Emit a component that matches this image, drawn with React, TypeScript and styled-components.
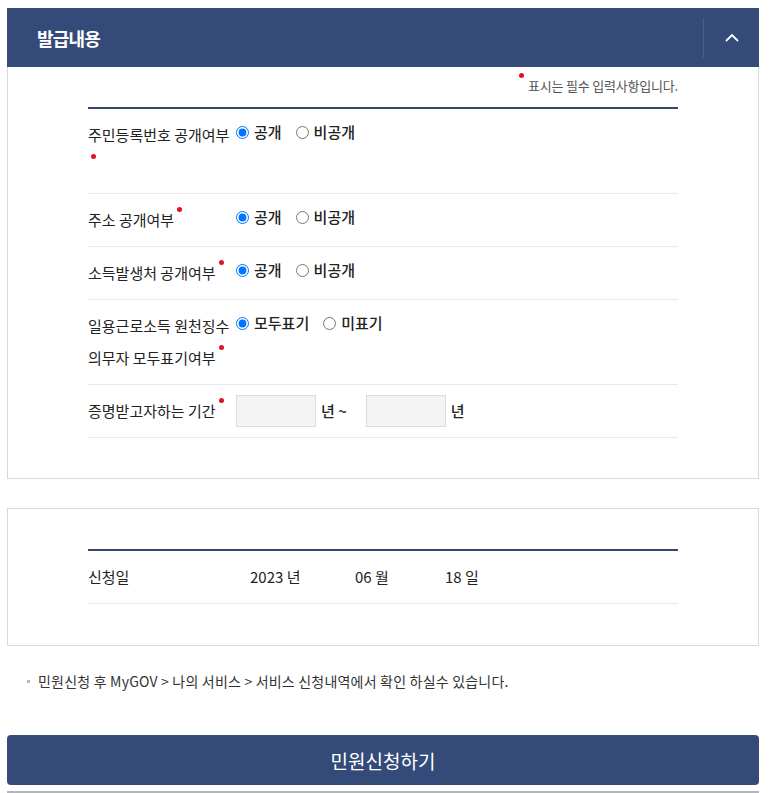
import styled, { createGlobalStyle } from "styled-components";

const GlobalStyle = createGlobalStyle`
  html, body {
    margin: 0;
    padding: 0;
    background: #fff;
  }
  body {
    font-family: "Noto Sans CJK KR", "Noto Sans", sans-serif;
    color: #222;
  }
`;

const Page = styled.div`
  width: 752px;
  padding: 8px 0 0 7px;
`;

const Header = styled.div`
  height: 59px;
  background: #344b79;
  display: flex;
  align-items: center;
  justify-content: space-between;
`;

const Title = styled.h2`
  margin: 0 0 0 30px;
  font-size: 18px;
  font-weight: 700;
  color: #fff;
  letter-spacing: -0.8px;
`;

const Toggle = styled.button`
  width: 56px;
  height: 40px;
  padding: 0;
  border: 0;
  border-left: 1px solid #4a5f8a;
  background: transparent;
  display: flex;
  align-items: center;
  justify-content: center;
  cursor: pointer;
`;

const Panel = styled.div<{ open?: boolean }>`
  border: 1px solid #d9d9d9;
  border-top: ${(p) => (p.open ? "0" : "1px solid #d9d9d9")};
  padding: ${(p) => (p.open ? "9px 80px 40px" : "40px 80px 41px")};
`;

const Spacer = styled.div`
  height: 29px;
`;

const Required = styled.p`
  margin: 0 0 11px;
  text-align: right;
  font-size: 13px;
  line-height: 20px;
  color: #555;
  letter-spacing: -0.2px;
`;

const Dot = styled.span<{ inline?: boolean }>`
  display: inline-block;
  width: 5px;
  height: 5px;
  border-radius: 50%;
  background: #e0141e;
  margin-left: ${(p) => (p.inline ? "3px" : "0")};
  margin-right: ${(p) => (p.inline ? "0" : "4px")};
  position: relative;
  top: -12px;
  vertical-align: middle;
`;

const Table = styled.div`
  border-top: 2px solid #34466a;
`;

const Row = styled.div`
  display: flex;
  align-items: flex-start;
  border-bottom: 1px solid #e9e9e9;
  padding: 10px 0;
`;

const Label = styled.div<{ wide?: boolean }>`
  width: ${(p) => (p.wide ? "162px" : "148px")};
  flex-shrink: 0;
  font-size: 15px;
  line-height: 32px;
  color: #222;
  word-break: keep-all;
`;

const Value = styled.div`
  display: flex;
  align-items: center;
  min-height: 26px;
  font-size: 15px;
  font-weight: 500;
  color: #222;
`;

const RadioItem = styled.label`
  display: flex;
  align-items: center;
  margin-right: 14px;
  line-height: 26px;
  cursor: pointer;

  input {
    margin: 0 5px 0 0;
    width: 13px;
    height: 13px;
  }
`;

const YearInput = styled.input`
  width: 80px;
  height: 32px;
  box-sizing: border-box;
  border: 1px solid #dcdcdc;
  background: #f4f4f4;
`;

const Unit = styled.span<{ gap?: number }>`
  margin-left: 5px;
  margin-right: ${(p) => p.gap ?? 0}px;
  line-height: 32px;
`;

const DateRow = styled.div`
  display: flex;
  align-items: center;
  font-size: 15px;
  font-weight: 400;
  line-height: 32px;
`;

const DateValue = styled.span<{ w: number }>`
  width: ${(p) => p.w}px;
`;

const Note = styled.p`
  margin: 25px 0 0;
  padding-left: 21px;
  position: relative;
  font-size: 14px;
  line-height: 20px;
  color: #333;
  letter-spacing: 0.2px;

  &::before {
    content: "";
    position: absolute;
    left: 20px;
    top: 9px;
    width: 3px;
    height: 3px;
    background: #bbb;
  }
  span {
    padding-left: 10px;
  }
`;

const SubmitButton = styled.button`
  display: block;
  width: 100%;
  height: 50px;
  margin-top: 44px;
  border: 0;
  border-radius: 4px;
  background: #344b79;
  color: #fff;
  font-family: inherit;
  font-size: 19px;
  cursor: pointer;
`;

const BottomLine = styled.div`
  height: 2px;
  margin-top: 6px;
  background: #b4b4bc;
`;

const radioRows = [
  { name: "jumin", label: "주민등록번호 공개여부", options: ["공개", "비공개"] },
  { name: "addr", label: "주소 공개여부", options: ["공개", "비공개"] },
  { name: "income", label: "소득발생처 공개여부", options: ["공개", "비공개"] },
  { name: "daily", label: "일용근로소득 원천징수 의무자 모두표기여부", options: ["모두표기", "미표기"] },
];

export default function App() {
  return (
    <Page>
      <GlobalStyle />
      <Header>
        <Title>발급내용</Title>
        <Toggle aria-label="접기">
          <svg width="16" height="10" viewBox="0 0 16 10">
            <path d="M2 8 L8 2 L14 8" fill="none" stroke="#fff" strokeWidth="1.8" />
          </svg>
        </Toggle>
      </Header>
      <Panel open>
        <Required>
          <Dot />
          표시는 필수 입력사항입니다.
        </Required>
        <Table>
          {radioRows.map((r) => (
            <Row key={r.name}>
              <Label>
                {r.label}
                <Dot inline />
              </Label>
              <Value>
                {r.options.map((o, i) => (
                  <RadioItem key={o}>
                    <input type="radio" name={r.name} defaultChecked={i === 0} />
                    {o}
                  </RadioItem>
                ))}
              </Value>
            </Row>
          ))}
          <Row>
            <Label>
              증명받고자하는 기간
              <Dot inline />
            </Label>
            <Value>
              <YearInput type="text" />
              <Unit gap={19}>년 ~</Unit>
              <YearInput type="text" />
              <Unit>년</Unit>
            </Value>
          </Row>
        </Table>
      </Panel>
      <Spacer />
      <Panel>
        <Table>
          <Row>
            <Label wide>신청일</Label>
            <DateRow>
              <DateValue w={105}>2023 년</DateValue>
              <DateValue w={90}>06 월</DateValue>
              <DateValue w={60}>18 일</DateValue>
            </DateRow>
          </Row>
        </Table>
      </Panel>
      <Note>
        <span>민원신청 후 MyGOV &gt; 나의 서비스 &gt; 서비스 신청내역에서 확인 하실수 있습니다.</span>
      </Note>
      <SubmitButton>민원신청하기</SubmitButton>
      <BottomLine />
    </Page>
  );
}
